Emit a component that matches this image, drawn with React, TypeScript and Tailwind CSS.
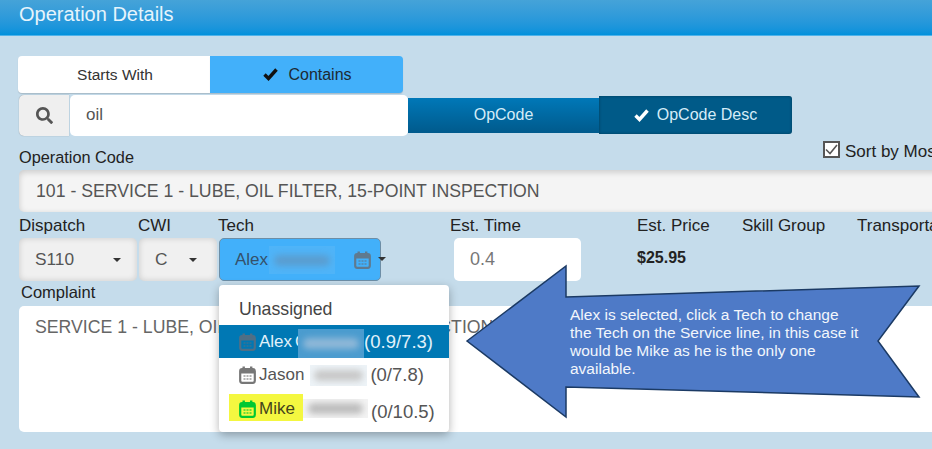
import { FaSearch } from "react-icons/fa";

function CheckIcon({ color }: { color: string }) {
  return (
    <svg width="15" height="13" viewBox="0 0 15 13" fill="none" className="shrink-0">
      <path d="M1.5 6.5 5.5 10.5 13.5 1.5" stroke={color} strokeWidth="3.4" />
    </svg>
  );
}

function CalendarIcon({ color }: { color: string }) {
  return (
    <svg width="17" height="18" viewBox="0 0 17 18" fill="none" className="shrink-0">
      <rect x="1.2" y="3.2" width="14.6" height="13.6" rx="2" stroke={color} strokeWidth="2.2" />
      <rect x="1" y="3" width="15" height="4.5" fill={color} />
      <rect x="3.5" y="0.5" width="2.4" height="4" fill={color} />
      <rect x="11" y="0.5" width="2.4" height="4" fill={color} />
      <path d="M4.5 10h2M7.5 10h2M10.5 10h2M4.5 13h2M7.5 13h2M10.5 13h2" stroke={color} strokeWidth="1.6" opacity="0.75" />
    </svg>
  );
}

function Caret() {
  return <span className="h-0 w-0 shrink-0 border-x-[4px] border-t-[4px] border-x-transparent border-t-[#333]" />;
}

function Smudge({ box, bar, className }: { box: string; bar: string; className: string }) {
  return (
    <span className={`flex shrink-0 items-center justify-center overflow-hidden ${box} ${className}`}>
      <span className={`h-[11px] w-[86%] rounded-full blur-[3px] ${bar}`} />
    </span>
  );
}

function TopLabel({ children, className }: { children: string; className: string }) {
  return <span className={`text-[17px] leading-[18px] text-[#222] ${className}`}>{children}</span>;
}

function SelectBox({ value, className }: { value: string; className: string }) {
  return (
    <div className={`flex h-[43px] items-center justify-between rounded-[5px] bg-[#f0f0f0] pl-4 pt-[1px] text-[17.3px] text-[#555] shadow-[inset_0_0_6px_rgba(0,0,0,0.16)] ${className}`}>
      <span>{value}</span>
      <Caret />
    </div>
  );
}

export default function App() {
  return (
    <div className="relative h-[449px] w-[932px] overflow-hidden bg-[#c5dceb] font-['Liberation_Sans',Arial,sans-serif]">
      {/* Header */}
      <div className="flex h-[36px] items-start border-b border-[#4fb3ea] bg-gradient-to-b from-[#45a3d8] to-[#0091dc] pl-[19px] pt-[2px] text-[20px] leading-[24px] text-[#e6f4fc]">
        Operation Details
      </div>

      <div className="w-[1000px] pl-[18px] pt-[20px]">
        {/* Match mode toggle */}
        <div className="flex h-[37px] w-[385px] text-[16px] text-[#333]">
          <div className="flex w-[192px] items-center justify-center rounded-l-[4px] bg-white pl-[2px] text-[15.5px] shadow-[0_1px_1px_rgba(0,0,0,0.15)]">
            Starts With
          </div>
          <div className="flex w-[193px] items-center justify-center gap-[10px] rounded-r-[4px] bg-[#42b0fa] pl-[2px] text-[#1d2a33] shadow-[0_1px_1px_rgba(0,0,0,0.15)]">
            <CheckIcon color="#111" />
            Contains
          </div>
        </div>

        {/* Search row */}
        <div className="mt-[1px] flex h-[42px] items-center">
          <div className="ml-[1px] flex h-[41px] w-[50px] items-center justify-center rounded-l-[5px] bg-[#efefef] shadow-[0_0_1px_rgba(0,0,0,0.4)]">
            <FaSearch className="text-[17px] text-[#555]" />
          </div>
          <div className="ml-[1px] flex h-[41px] w-[338px] items-center rounded-[5px] bg-white pl-[16px] text-[17px] text-[#555]">
            oil
          </div>
          <div className="flex h-[35px] w-[191px] items-center justify-center bg-gradient-to-b from-[#0078b8] to-[#005a8c] text-[16px] text-[#d5ecf8]">
            OpCode
          </div>
          <div className="flex h-[38px] w-[193px] items-center justify-center gap-[8px] rounded-r-[3px] bg-[#005a88] text-[16px] text-[#d5ecf8] shadow-[inset_0_0_3px_rgba(0,0,0,0.35)]">
            <CheckIcon color="#fff" />
            OpCode Desc
          </div>
        </div>

        {/* Operation code */}
        <div className="relative mt-[11px] flex h-[20px] items-center pl-[1px] text-[16.3px] leading-[18px] text-[#222]">
          Operation Code
          <div className="absolute left-[805px] top-[-6px] flex items-start gap-[5px] whitespace-nowrap text-[17px] leading-[18px] text-[#222]">
            <span className="flex h-[17px] w-[17px] items-center justify-center border-2 border-[#555] bg-white">
              <svg width="13" height="11" viewBox="0 0 13 11" fill="none">
                <path d="M1 5.5 5 9.5 12 1" stroke="#555" strokeWidth="1.6" />
              </svg>
            </span>
            <span className="mt-[2px]">Sort by Most Used</span>
          </div>
        </div>
        <div className="ml-[1px] mt-[3px] flex h-[42px] w-[960px] items-center rounded-[5px] bg-[#f4f4f4] pl-[17px] text-[17.7px] text-[#555] shadow-[inset_0_2px_6px_rgba(0,0,0,0.18)]">
          101 - SERVICE 1 - LUBE, OIL FILTER, 15-POINT INSPECTION
        </div>

        {/* Field labels */}
        <div className="mt-[4px] flex h-[20px] items-center whitespace-nowrap pl-[1px]">
          <TopLabel className="w-[119px]">Dispatch</TopLabel>
          <TopLabel className="w-[80px]">CWI</TopLabel>
          <TopLabel className="w-[232px]">Tech</TopLabel>
          <TopLabel className="w-[187px]">Est. Time</TopLabel>
          <TopLabel className="w-[105px]">Est. Price</TopLabel>
          <TopLabel className="w-[115px]">Skill Group</TopLabel>
          <TopLabel className="">Transportation</TopLabel>
        </div>

        {/* Field controls */}
        <div className="mt-[2px] flex h-[43px] items-start pl-[1px]">
          <SelectBox value="S110" className="w-[118px] pr-[16px]" />
          <SelectBox value="C" className="ml-[2px] w-[78px] pr-[20px]" />
          <div className="relative ml-[2px] flex h-[43px] w-[162px] items-center rounded-[5px] border border-[#6d8ea6] bg-[#42b0fa] pl-[15px] pt-[1px] text-[17px] text-[#35506a]">
            <span>Alex</span>
            <Smudge box="bg-[#4fb4f8] h-[28px]" bar="bg-[#5a9dd0]" className="ml-[1px] w-[66px]" />
            <span className="ml-[19px]">
              <CalendarIcon color="#5f7a8f" />
            </span>
            <span className="absolute left-[158px] top-[19px]">
              <Caret />
            </span>
          </div>
          <div className="ml-[73px] flex h-[43px] w-[127px] items-center rounded-[5px] bg-white pl-[16px] text-[18px] text-[#777]">
            0.4
          </div>
          <div className="ml-[56px] pt-[11px] text-[16px] font-bold leading-[18px] text-[#222]">$25.95</div>
        </div>

        {/* Complaint */}
        <div className="mt-[1px] h-[24px] pl-[3px] text-[16.5px] leading-[20px] text-[#222]">Complaint</div>
        <div className="ml-[1px] h-[126px] w-[960px] rounded-[5px] bg-white pl-[16px] pt-[11px] text-[17.7px] leading-[20px] text-[#666]">
          SERVICE 1 - LUBE, OIL FILTER, 15-POINT INSPECTION
        </div>
      </div>

      {/* Tech dropdown */}
      <div className="absolute left-[219px] top-[285px] h-[147px] w-[230px] rounded-[4px] bg-white text-[17px] shadow-[0_3px_10px_rgba(0,0,0,0.3)]">
        <div className="flex h-[40px] items-center pl-[20px] pt-[8px] text-[17.7px] text-[#444]">Unassigned</div>
        <div className="flex h-[33px] items-center bg-[#0078b4] pl-[20px] text-[#e2f2fb]">
          <CalendarIcon color="#4f6f86" />
          <span className="ml-[3px]">Alex</span>
          <span className="ml-[3px] w-[3px] overflow-hidden">C</span>
          <Smudge box="bg-[#4b9ccf] h-[29px] relative top-[2px]" bar="bg-[#8fb8d8]" className="w-[66px]" />
          <span className="text-[18.5px]">(0.9/7.3)</span>
        </div>
        <div className="flex h-[34px] items-center pl-[20px] text-[#555]">
          <CalendarIcon color="#777" />
          <span className="ml-[3px]">Jason</span>
          <Smudge box="bg-[#edf3f7] h-[21px]" bar="bg-[#c8c8c8]" className="ml-[6px] w-[57px]" />
          <span className="ml-[3px] text-[18.5px]">(0/7.8)</span>
        </div>
        <div className="flex h-[34px] items-start pl-[10px] text-[#555]">
          <span className="mt-[2px] flex h-[27px] w-[74px] items-center bg-[#f4f740] pl-[10px] pt-[3px] text-[#44441c]">
            <CalendarIcon color="#00c832" />
            <span className="ml-[3px]">Mike</span>
          </span>
          <Smudge box="bg-[#f3f3f3] h-[19px] mt-[7px]" bar="bg-[#bdbdbd]" className="w-[65px]" />
          <span className="ml-[3px] mt-[6px] text-[18.5px]">(0/10.5)</span>
        </div>
      </div>

      {/* Callout arrow */}
      <svg width="932" height="449" className="pointer-events-none absolute left-0 top-0">
        <polygon
          points="467,341 566,266 566,297 919,286 878,341 919,397 566,387 566,417"
          fill="#4e7ac7"
          stroke="#1b3a64"
          strokeWidth="1.5"
        />
      </svg>
      <div className="absolute left-[570px] top-[306px] w-[300px] text-[15.5px] leading-[18px] text-[#f2f6fc]">
        Alex is selected, click a Tech to change
        <br />
        the Tech on the Service line, in this case it
        <br />
        would be Mike as he is the only one
        <br />
        available.
      </div>
    </div>
  );
}
